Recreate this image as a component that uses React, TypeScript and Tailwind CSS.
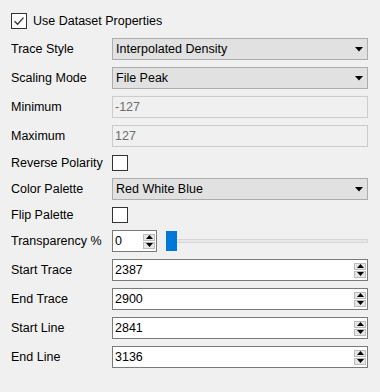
import type { ReactNode } from "react";

const font = { fontFamily: '"Liberation Sans", Arial, sans-serif' };

const Check = ({ checked }: { checked?: boolean }) => (
  <span className="flex h-[16px] w-[16px] shrink-0 items-center justify-center border border-[#333333] bg-white">
    {checked && (
      <svg width="12" height="10" viewBox="0 0 12 10">
        <path d="M1.5 5.2 L4.6 8.2 L10.5 1.6" fill="none" stroke="#333333" strokeWidth="1.3" />
      </svg>
    )}
  </span>
);

const Combo = ({ value }: { value: string }) => (
  <div className="flex h-[22px] w-full items-center justify-between border border-[#adadad] bg-[#e1e1e1] pl-[3px] pr-[4px]">
    <span>{value}</span>
    <svg width="8" height="5" viewBox="0 0 8 5">
      <path d="M0 0 H8 L4 4.5 Z" fill="#000" />
    </svg>
  </div>
);

const Disabled = ({ value }: { value: string }) => (
  <div className="flex h-[22px] w-full items-center border border-[#cccccc] bg-[#f0f0f0] pl-[2px] text-[#6d6d6d]">
    {value}
  </div>
);

const SpinButtons = () => (
  <div className="flex flex-col gap-[1px]">
    <span className="flex h-[7px] w-[12px] items-center justify-center border border-[#bcbcbc] bg-[#e6e6e6]">
      <svg width="7" height="4" viewBox="0 0 7 4">
        <path d="M0 4 H7 L3.5 0 Z" fill="#000" />
      </svg>
    </span>
    <span className="flex h-[7px] w-[12px] items-center justify-center border border-[#bcbcbc] bg-[#e6e6e6]">
      <svg width="7" height="4" viewBox="0 0 7 4">
        <path d="M0 0 H7 L3.5 4 Z" fill="#000" />
      </svg>
    </span>
  </div>
);

const Spin = ({ value, className = "w-full" }: { value: string; className?: string }) => (
  <div className={`flex h-[22px] items-center justify-between border border-[#7a7a7a] bg-white pl-[2px] pr-[1px] ${className}`}>
    <span>{value}</span>
    <SpinButtons />
  </div>
);

const Row = ({ label, children, h = "h-[22px]" }: { label: string; children: ReactNode; h?: string }) => (
  <div className={`flex items-center ${h}`}>
    <span className="w-[101px] shrink-0 whitespace-nowrap">{label}</span>
    <div className="flex flex-1 items-center">{children}</div>
  </div>
);

export default function App() {
  return (
    <div
      className="flex h-[392px] w-[380px] flex-col gap-[7px] bg-[#f0f0f0] pl-[11px] pr-[12px] pt-[13px] text-[12.5px] text-black"
      style={font}
    >
      <div className="mb-[2px] flex h-[16px] items-center gap-[6px]">
        <Check checked />
        <span>Use Dataset Properties</span>
      </div>
      <Row label="Trace Style">
        <Combo value="Interpolated Density" />
      </Row>
      <Row label="Scaling Mode">
        <Combo value="File Peak" />
      </Row>
      <Row label="Minimum">
        <Disabled value="-127" />
      </Row>
      <Row label="Maximum">
        <Disabled value="127" />
      </Row>
      <Row label="Reverse Polarity" h="h-[16px] mt-[1px]">
        <Check />
      </Row>
      <Row label="Color Palette">
        <Combo value="Red White Blue" />
      </Row>
      <Row label="Flip Palette" h="h-[16px]">
        <Check />
      </Row>
      <Row label="Transparency %">
        <Spin value="0" className="w-[45px]" />
        <div className="relative ml-[9px] flex h-[20px] flex-1 items-center">
          <div className="h-[4px] w-full border border-[#d6d6d6] bg-[#e7e7e7]" />
          <div className="absolute left-0 top-0 h-[20px] w-[11px] bg-[#0078d7]" />
        </div>
      </Row>
      <Row label="Start Trace">
        <Spin value="2387" />
      </Row>
      <Row label="End Trace">
        <Spin value="2900" />
      </Row>
      <Row label="Start Line">
        <Spin value="2841" />
      </Row>
      <Row label="End Line">
        <Spin value="3136" />
      </Row>
    </div>
  );
}
